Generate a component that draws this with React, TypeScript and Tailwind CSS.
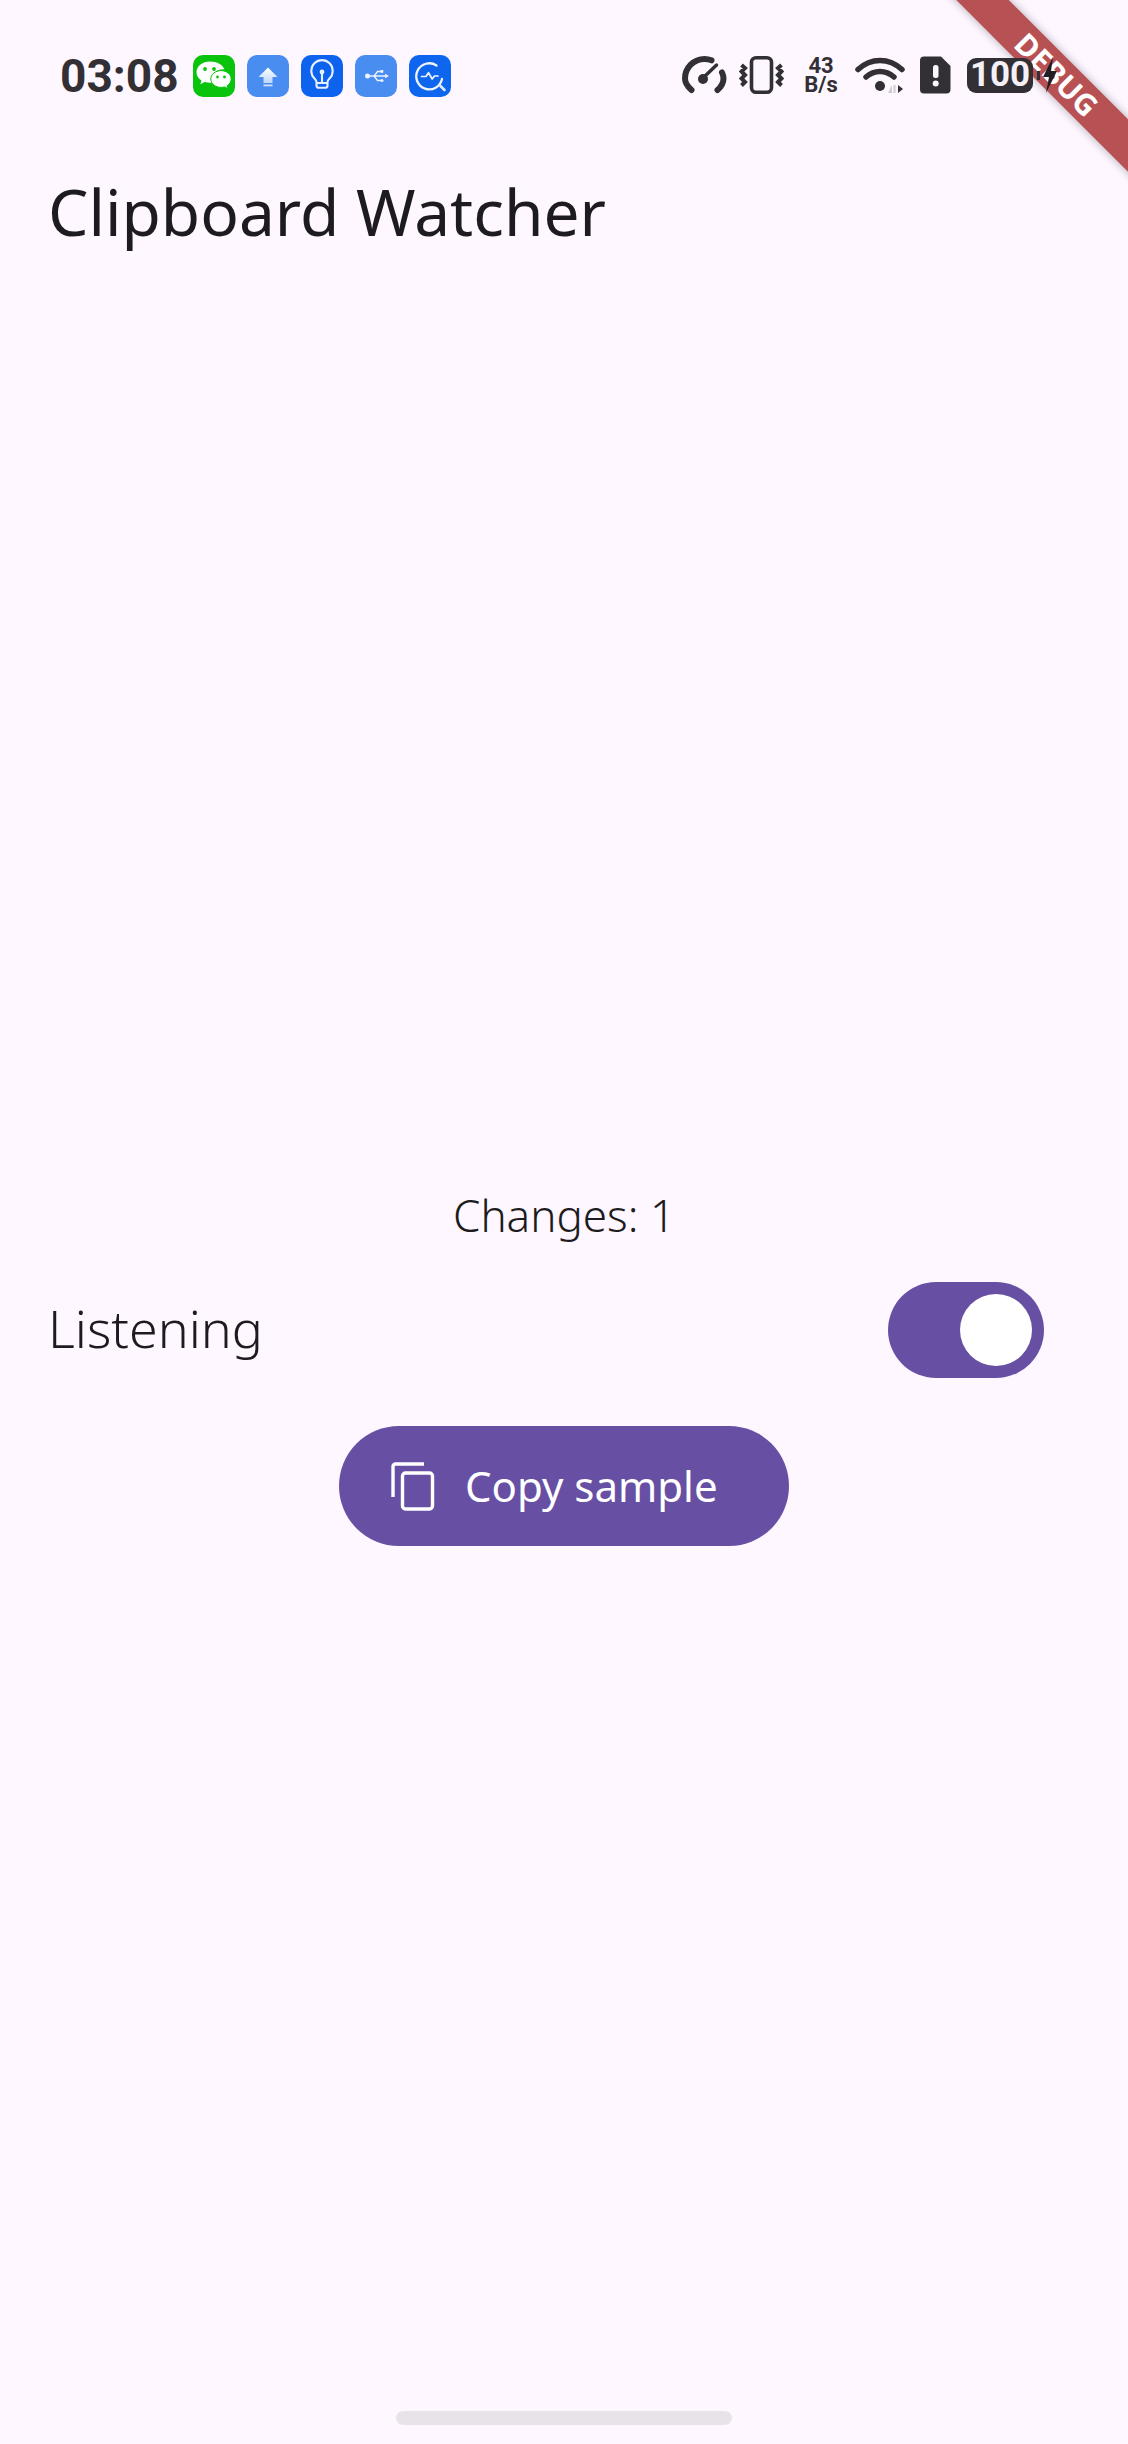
import React from "react";

const ink = "#322f35";

function WeChat() {
  return (
    <svg width="42" height="42" viewBox="0 0 42 42" className="shrink-0">
      <rect width="42" height="42" rx="10" fill="#0ac30d" />
      <path d="M17 6.500C9.800 6.500 3.500 11 3.500 17.200c0 3.500 2 6.300 5 8.300l-1.200 3.700 4.300-2.300c1.700.5 3.500.8 5.400.8l2 0c-.5-1.100-.7-2.300-.7-3.500 0-5.600 5.300-10 11.900-10l1.200.1C29.900 9.700 23.900 6.500 17 6.500Z" fill="#fff" />
      <path d="M28 15.600c-5.700 0-10.200 3.800-10.200 8.400s4.500 8.400 10.200 8.400c1.300 0 2.500-.2 3.600-.5l3.500 1.900-1-3c2.500-1.600 4.100-4 4.100-6.800 0-4.600-4.500-8.400-10.200-8.400Z" fill="#fff" stroke="#0ac30d" strokeWidth="1" />
      <circle cx="12" cy="14" r="1.900" fill="#0ac30d" />
      <circle cx="21" cy="14" r="1.900" fill="#0ac30d" />
      <circle cx="24.500" cy="22" r="1.400" fill="#0ac30d" />
      <circle cx="31.500" cy="22" r="1.400" fill="#0ac30d" />
    </svg>
  );
}

function Upload() {
  return (
    <svg width="42" height="42" viewBox="0 0 42 42" className="shrink-0">
      <defs>
        <linearGradient id="ua" x1="0" y1="0" x2="0" y2="1">
          <stop offset="0" stopColor="#ffffff" />
          <stop offset="1" stopColor="#bcd6fb" />
        </linearGradient>
      </defs>
      <rect width="42" height="42" rx="10" fill="#4a8df0" />
      <path d="M21 12.500l9.500 9.500H25.500v6h-9v-6H11.500Z" fill="url(#ua)" />
      <rect x="16.500" y="29.500" width="9" height="1.800" fill="#cfe1fc" />
    </svg>
  );
}

function Bulb() {
  return (
    <svg width="42" height="42" viewBox="0 0 42 42" className="shrink-0">
      <rect width="42" height="42" rx="10" fill="#0d62ee" />
      <path d="M15.500 30.500v-3.300c0-1.500-.8-2.500-2-3.700a10.700 10.700 0 1 1 15 0c-1.200 1.200-2 2.200-2 3.700v3.300c0 1.400-.9 2.300-2.300 2.300h-6.400c-1.400 0-2.300-.9-2.300-2.300Z" fill="none" stroke="#e6f0ff" strokeWidth="2.100" />
      <path d="M21 18v9M15.500 28h11" fill="none" stroke="#e6f0ff" strokeWidth="2.100" />
      <circle cx="21" cy="17" r="2.400" fill="#e6f0ff" />
    </svg>
  );
}

function Usb() {
  return (
    <svg width="42" height="42" viewBox="0 0 42 42" className="shrink-0">
      <rect width="42" height="42" rx="10" fill="#4a8df0" />
      <circle cx="12.500" cy="21" r="2.500" fill="#eaf2ff" />
      <path d="M12.500 21H32M16 21l3.200 0 3.300-4.500H26M19 21l3.500 4.500H26" fill="none" stroke="#eaf2ff" strokeWidth="1.400" />
      <path d="M30 18.800l4 2.200-4 2.200Z" fill="#eaf2ff" />
      <rect x="25.500" y="15" width="2.800" height="2.800" fill="#eaf2ff" />
      <circle cx="27" cy="25.500" r="1.500" fill="#eaf2ff" />
    </svg>
  );
}

function Monitor() {
  return (
    <svg width="42" height="42" viewBox="0 0 42 42" className="shrink-0">
      <rect width="42" height="42" rx="10" fill="#0e65ee" />
      <path d="M27.500 10.500A13 13 0 1 0 33 24" fill="none" stroke="#eef5ff" strokeWidth="2.300" strokeLinecap="round" />
      <path d="M30.500 30l5 5" stroke="#dce9ff" strokeWidth="2.600" strokeLinecap="round" />
      <path d="M12.500 21.500h4.500l2.500-3.800 3.700 6.300 2.300-3h3.500" fill="none" stroke="#eef5ff" strokeWidth="1.700" strokeLinejoin="round" strokeLinecap="round" />
    </svg>
  );
}

function Gauge() {
  return (
    <svg width="45" height="38" viewBox="0 0 45 38" className="shrink-0">
      <path d="M9.500 34C5 30 3 27 3 22.500 3 11.800 11.800 3 22.500 3c2.500 0 5 .5 7 1.300" fill="none" stroke={ink} strokeWidth="6" strokeLinecap="round" />
      <path d="M40 16.500c1 2 1.500 4 1.500 6 0 4.500-2 8-6 11.500" fill="none" stroke={ink} strokeWidth="6" strokeLinecap="round" />
      <path d="M21 22 34.500 9" stroke={ink} strokeWidth="3.400" strokeLinecap="round" />
      <circle cx="21" cy="23" r="5" fill={ink} />
    </svg>
  );
}

function Vibrate() {
  return (
    <svg width="45" height="38" viewBox="0 0 45 38" className="shrink-0">
      <rect x="12.500" y="1.800" width="20" height="34.400" rx="4.500" fill="none" stroke={ink} strokeWidth="3.600" />
      <path d="M2.500 9l3.500 3-3.500 3.500L6 19l-3.500 3.500L6 26l-3.500 3.500M42.500 9L39 12l3.500 3.500L39 19l3.500 3.500L39 26l3.500 3.500" fill="none" stroke={ink} strokeWidth="4" />
    </svg>
  );
}

function Wifi() {
  return (
    <svg width="52" height="38" viewBox="0 0 52 38" className="shrink-0">
      <path d="M3 13.500C9.500 7.500 17 4.500 25 4.500s15.500 3 22 9" fill="none" stroke={ink} strokeWidth="5.500" strokeLinecap="round" />
      <path d="M11 21c4-3.500 9-5.500 14-5.500S35 17.500 39 21" fill="none" stroke={ink} strokeWidth="5.500" strokeLinecap="round" />
      <circle cx="25" cy="30" r="5" fill={ink} />
      <path d="M37 37v-8l-4 8Z" fill="#cfcbd2" />
      <path d="M38.500 29h2v8h-2Z" fill="#cfcbd2" />
      <path d="M43 29l5 4-5 4Z" fill={ink} />
    </svg>
  );
}

function Alert() {
  return (
    <svg width="31" height="38" viewBox="0 0 31 38" className="shrink-0">
      <path d="M4 0.500H21L30.500 10V33.500a4 4 0 0 1-4 4H4a4 4 0 0 1-4-4V4.500a4 4 0 0 1 4-4Z" fill={ink} />
      <rect x="13" y="9" width="5.500" height="13" rx="2.500" fill="#fef7ff" />
      <circle cx="15.700" cy="27.500" r="3" fill="#fef7ff" />
    </svg>
  );
}

function CopyIcon() {
  return (
    <svg width="44" height="50" viewBox="0 0 44 50" className="shrink-0">
      <path d="M33 3H4.500A2.500 2.500 0 0 0 2 5.500V36" fill="none" stroke="#fff" strokeWidth="3.400" />
      <rect x="11.500" y="12" width="30" height="36" rx="3" fill="none" stroke="#fff" strokeWidth="3.400" />
    </svg>
  );
}

export default function App() {
  return (
    <div className="relative flex min-h-[2444px] w-[1128px] flex-col overflow-hidden bg-[#fef7ff] text-[#1d1b20] [font-family:'Noto_Sans',sans-serif]">
      <div className="pointer-events-none absolute left-[904px] top-[53px] flex h-[37px] w-[300px] rotate-45 items-center justify-center bg-[#b75154] pl-[8px] text-[30px] font-bold leading-none text-white shadow-[0_0_10px_rgba(0,0,0,0.3)] [font-family:'Noto_Sans',sans-serif]">
        DEBUG
      </div>

      <div className="relative flex h-[180px] shrink-0 items-start pt-[55px]">
        <div className="flex items-center pl-[60px]">
          <span className="w-[133px] text-[46px] font-bold leading-[42px] text-[#322f35] [font-family:Roboto,sans-serif]">03:08</span>
          <div className="flex gap-[12px]">
            <WeChat />
            <Upload />
            <Bulb />
            <Usb />
            <Monitor />
          </div>
        </div>
        <div className="absolute left-[682px] top-[56px] flex items-center">
          <Gauge />
          <div className="ml-[12px]"><Vibrate /></div>
          <div className="ml-[19px] flex w-[36px] flex-col items-center text-[#322f35] [font-family:Roboto,sans-serif]">
            <span className="text-[22px] font-bold leading-[19px]">43</span>
            <span className="text-[22px] font-bold leading-[19px]">B/s</span>
          </div>
          <div className="ml-[16px]"><Wifi /></div>
          <div className="ml-[13px]"><Alert /></div>
          <div className="ml-[16px] flex h-[35px] w-[66px] items-center justify-center rounded-[9px] bg-[#322f35] text-[35px] font-bold text-[#f4f0f5] [font-family:Roboto,sans-serif]">100</div>
          <span className="ml-[4px] h-[9px] w-[3px] bg-[#322f35]" />
          <svg width="16" height="36" viewBox="0 0 16 36" className="ml-[2px] shrink-0">
            <path d="M11 0 1 20h6L4 36 15 14H9Z" fill="#211f24" />
          </svg>
        </div>
      </div>

      <div className="flex h-[64px] shrink-0 items-center pl-[48px]">
        <h1 className="text-[64px] font-normal leading-none">Clipboard Watcher</h1>
      </div>

      <main className="flex flex-col items-center pt-[936px]">
        <p className="text-[44px] font-light leading-[70px]">Changes: 1</p>
        <div className="mt-[32px] flex h-[96px] w-full items-center justify-between pl-[48px] pr-[84px]">
          <span className="-mt-[4px] text-[52px] font-light leading-none">Listening</span>
          <div className="flex h-[96px] w-[156px] items-center justify-end rounded-full bg-[#6750a4] pr-[12px]">
            <div className="size-[72px] rounded-full bg-white" />
          </div>
        </div>
        <button className="mt-[48px] flex h-[120px] w-[450px] items-center rounded-full bg-[#6750a4] pl-[52px] text-white">
          <CopyIcon />
          <span className="ml-[30px] text-[42px] leading-none">Copy sample</span>
        </button>
      </main>

      <div className="absolute bottom-[19px] left-[396px] h-[14px] w-[336px] rounded-full bg-[#e8e3e9]" />
    </div>
  );
}
